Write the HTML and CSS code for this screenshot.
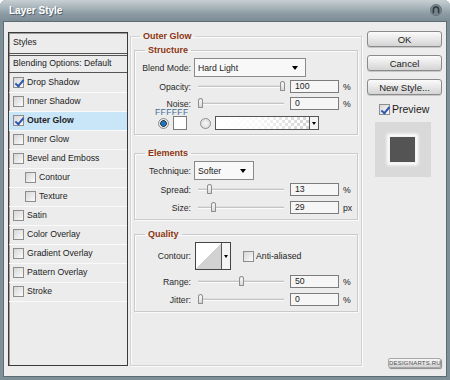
FILE: index.html
```html
<!DOCTYPE html>
<html lang="en">
<head>
  <meta charset="UTF-8">
  <title>Layer Style</title>
  <link rel="stylesheet" href="styles.css">
</head>
<body>
  <div class="window">
    <div class="titlebar">
      <span class="title">Layer Style</span>
      <svg class="close" width="12" height="12" viewBox="-6 -6 12 12">
        <circle r="5.5" fill="#77858c" stroke="#5c6a71" stroke-width="0.8"/>
        <path d="M-2.6 3.2 V-0.4 A2.6 2.6 0 0 1 2.6 -0.4 V3.2" fill="none" stroke="#2f393e" stroke-width="1.6"/>
      </svg>
    </div>

    <div class="content">
      <!-- Styles list -->
      <div class="styles-list">
        <div class="list-head">Styles</div>
        <div class="list-blend">Blending Options: Default</div>
        <div class="item"><span class="cb on"></span>Drop Shadow</div>
        <div class="item"><span class="cb"></span>Inner Shadow</div>
        <div class="item active"><span class="cb on"></span>Outer Glow</div>
        <div class="item"><span class="cb"></span>Inner Glow</div>
        <div class="item"><span class="cb"></span>Bevel and Emboss</div>
        <div class="item sub"><span class="cb"></span>Contour</div>
        <div class="item sub"><span class="cb"></span>Texture</div>
        <div class="item"><span class="cb"></span>Satin</div>
        <div class="item"><span class="cb"></span>Color Overlay</div>
        <div class="item"><span class="cb"></span>Gradient Overlay</div>
        <div class="item"><span class="cb"></span>Pattern Overlay</div>
        <div class="item"><span class="cb"></span>Stroke</div>
      </div>

      <!-- Settings -->
      <fieldset class="outer">
        <legend>Outer Glow</legend>

        <fieldset class="group structure">
          <legend>Structure</legend>
          <div class="row row-select">
            <span class="lbl">Blend Mode:</span>
            <div class="select blend"><span>Hard Light</span><i class="arrow"></i></div>
          </div>
          <div class="row row-slider opacity">
            <span class="lbl">Opacity:</span>
            <div class="slider"><span class="thumb" style="left: 82px"></span></div>
            <span class="num">100</span><span class="unit">%</span>
          </div>
          <div class="row row-slider noise">
            <span class="lbl">Noise:</span>
            <div class="slider"><span class="thumb" style="left: 0px"></span></div>
            <span class="num">0</span><span class="unit">%</span>
          </div>
          <div class="hex">FFFFFF</div>
          <div class="row row-color">
            <span class="radio on"></span>
            <span class="swatch"></span>
            <span class="radio"></span>
            <div class="gradient"><span class="gradient-fill"></span><i class="arrow-box"><i class="arrow"></i></i></div>
          </div>
        </fieldset>

        <fieldset class="group elements">
          <legend>Elements</legend>
          <div class="row row-select">
            <span class="lbl">Technique:</span>
            <div class="select technique"><span>Softer</span><i class="arrow"></i></div>
          </div>
          <div class="row row-slider spread">
            <span class="lbl">Spread:</span>
            <div class="slider"><span class="thumb" style="left: 9px"></span></div>
            <span class="num">13</span><span class="unit">%</span>
          </div>
          <div class="row row-slider size">
            <span class="lbl">Size:</span>
            <div class="slider"><span class="thumb" style="left: 13px"></span></div>
            <span class="num">29</span><span class="unit">px</span>
          </div>
        </fieldset>

        <fieldset class="group quality">
          <legend>Quality</legend>
          <div class="row row-contour">
            <span class="lbl">Contour:</span>
            <div class="contour"><span class="curve"></span><i class="arrow-box"><i class="arrow"></i></i></div>
            <span class="cb"></span><span class="aa">Anti-aliased</span>
          </div>
          <div class="row row-slider range">
            <span class="lbl">Range:</span>
            <div class="slider"><span class="thumb" style="left: 41px"></span></div>
            <span class="num">50</span><span class="unit">%</span>
          </div>
          <div class="row row-slider jitter">
            <span class="lbl">Jitter:</span>
            <div class="slider"><span class="thumb" style="left: 0px"></span></div>
            <span class="num">0</span><span class="unit">%</span>
          </div>
        </fieldset>
      </fieldset>

      <!-- Buttons and preview -->
      <div class="actions">
        <button class="btn">OK</button>
        <button class="btn">Cancel</button>
        <button class="btn">New Style...</button>
        <div class="preview-toggle"><span class="cb on"></span>Preview</div>
        <div class="preview"><div class="preview-square"></div></div>
        <div class="badge">DESIGNARTS.RU</div>
      </div>
    </div>
  </div>
</body>
</html>
```

FILE: styles.css
```css
* {
  box-sizing: border-box;
}

body {
  margin: 0;
  font-family: "Liberation Sans", Arial, sans-serif;
  font-size: 8.7px;
  color: #222;
  background: #fff;
}

.window {
  width: 450px;
  height: 380px;
  background: #7f8f98;
  border-radius: 6px 6px 0 0;
  display: flex;
  flex-direction: column;
}

.titlebar {
  height: 21px;
  flex-shrink: 0;
  display: flex;
  align-items: center;
  justify-content: space-between;
  padding: 0 8px 1px 9px;
  border-radius: 6px 6px 0 0;
  background: linear-gradient(#c6cfd4, #a9b5bb 35%, #8d9ca4 65%, #7d8d96);
}

.title {
  color: #fff;
  font-size: 10px;
  font-weight: bold;
  text-shadow: 1px 1px 0 #55656d;
}

.close {
  display: block;
}

.content {
  flex: 1;
  margin: 0 3px 3px;
  background: #ececec;
  border: 1px solid #5d6c74;
  display: flex;
  align-items: flex-start;
  padding: 0 5px 0 4px;
}

/* Styles list */
.styles-list {
  width: 120px;
  height: 334px;
  margin-top: 10px;
  border: 1px solid #3a3a3a;
  box-shadow: inset 1px 1px 0 #9a9a9a;
  background: #ececec;
  flex-shrink: 0;
}

.list-head {
  height: 21px;
  line-height: 19px;
  padding-left: 4px;
  border-bottom: 1px solid #555;
}

.list-blend {
  margin: 1px 0;
  height: 18px;
  line-height: 15px;
  padding-left: 4px;
  border-top: 1px solid #555;
  border-bottom: 1px solid #555;
}

.item {
  height: 19px;
  display: flex;
  align-items: center;
  padding: 0 0 2px 4px;
  border-bottom: 1px solid #fafafa;
}

.item .cb {
  margin-right: 3px;
}

.item.sub {
  padding-left: 16px;
}

.item.active {
  background: #c9e6f8;
  font-weight: bold;
}

.cb {
  position: relative;
  display: inline-block;
  width: 11px;
  height: 11px;
  flex-shrink: 0;
  border: 1px solid #8d8d8d;
  background: linear-gradient(135deg, #d6d6d6, #fbfbfb);
}

.cb.on::after {
  content: "";
  position: absolute;
  left: 3px;
  top: 0px;
  width: 3px;
  height: 7px;
  border-right: 2px solid #2e58b0;
  border-bottom: 2px solid #2e58b0;
  transform: rotate(40deg);
}

/* Settings */
fieldset {
  margin: 0;
  min-width: 0;
}

legend {
  padding: 0 3px;
  line-height: 12px;
  font-weight: bold;
  color: #8c3410;
}

.outer {
  width: 232px;
  height: 336px;
  margin: 8px 0 0 2px;
  padding: 2px 3px 0;
  border: 1px solid #d2d2d2;
  box-shadow: inset 1px 1px 0 #fafafa, 1px 1px 0 #fafafa;
  flex-shrink: 0;
}

.outer > legend {
  margin-left: 6px;
  font-size: 9px;
}

.group {
  padding: 0 0 5px;
  border: 1px solid #cacaca;
  box-shadow: inset 1px 1px 0 #fafafa, 1px 1px 0 #fafafa;
}

.group > legend {
  margin-left: 10px;
  font-size: 9px;
}

.structure {
  padding-bottom: 4px;
}

.elements {
  margin-top: 12px;
}

.quality {
  margin-top: 8px;
}

.row {
  display: flex;
  align-items: center;
}

.lbl {
  width: 56px;
  text-align: right;
  flex-shrink: 0;
  color: #2a2a2a;
}

.row-select {
  height: 19px;
  margin-top: 2px;
}

.select {
  height: 19px;
  margin-left: 3px;
  display: flex;
  align-items: center;
  justify-content: space-between;
  padding: 0 7px 0 3px;
  background: #f8f8f8;
  border: 1px solid #8a8a8a;
}

.blend {
  width: 112px;
}

.technique {
  width: 60px;
}

.arrow {
  display: block;
  width: 0;
  height: 0;
  border-left: 3.5px solid transparent;
  border-right: 3.5px solid transparent;
  border-top: 4px solid #000;
}

.row-slider {
  height: 13px;
  margin-top: 4px;
}

.row-slider.opacity,
.row-slider.spread {
  margin-top: 3px;
}

.row-slider.size,
.row-slider.range,
.row-slider.jitter {
  margin-top: 5px;
}

.slider {
  position: relative;
  width: 86px;
  height: 13px;
  margin-left: 7px;
  background: linear-gradient(#c4c4c4, #c4c4c4) 0 6px / 100% 1px no-repeat,
    linear-gradient(#fbfbfb, #fbfbfb) 0 7px / 100% 1px no-repeat,
    linear-gradient(#dedede, #dedede) 0 5px / 100% 1px no-repeat;
}

.thumb {
  position: absolute;
  top: 1px;
  width: 5px;
  height: 10px;
  border: 1px solid #8e8e8e;
  border-radius: 3px 3px 1px 1px;
  background: linear-gradient(#fdfdfd, #d8d8d8);
}

.num {
  width: 49px;
  height: 13px;
  margin-left: 6px;
  padding-left: 4px;
  line-height: 11px;
  background: #f6f6f6;
  border: 1px solid #7c7c7c;
}

.unit {
  margin-left: 4px;
}

.hex {
  margin: -2px 0 0 20px;
  height: 8px;
  line-height: 8px;
  font-size: 8.5px;
  letter-spacing: 0.4px;
  color: #3f6d92;
}

.row-color {
  height: 14px;
  margin-top: 0;
  padding-left: 23px;
}

.radio {
  width: 11px;
  height: 11px;
  border-radius: 50%;
  border: 1px solid #8d8d8d;
  background: radial-gradient(circle, #f7f7f7, #d6d6d6);
}

.radio.on {
  background: radial-gradient(circle, #1c78c4 0 2px, #2b3a46 2.6px 3px, #e6e6e6 3.6px);
}

.swatch {
  width: 14px;
  height: 14px;
  margin: 0 13px 0 4px;
  background: #fff;
  border: 1px solid #7a7a7a;
}

.gradient {
  width: 104px;
  height: 14px;
  margin-left: 4px;
  display: flex;
  border: 1px solid #555;
}

.gradient-fill {
  flex: 1;
  background: linear-gradient(to right, #fff, rgba(255, 255, 255, 0.85) 45%, rgba(255, 255, 255, 0.1)),
    repeating-conic-gradient(#cfcfcf 0 25%, #fff 0 50%) 0 0 / 6px 6px;
}

.arrow-box {
  width: 9px;
  display: flex;
  align-items: center;
  justify-content: center;
  border-left: 1px solid #555;
  background: #f4f4f4;
}

.arrow-box .arrow {
  border-left-width: 2.5px;
  border-right-width: 2.5px;
  border-top-width: 3px;
}

.row-contour {
  height: 28px;
  margin-top: 2px;
}

.contour {
  width: 36px;
  height: 28px;
  margin: 0 12px 0 4px;
  display: flex;
  border: 1px solid #444;
}

.curve {
  flex: 1;
  background: linear-gradient(to bottom right, #fff 50%, #d2d2d2 50%);
}

.aa {
  margin-left: 2px;
}

/* Buttons and preview */
.actions {
  width: 75px;
  height: 337px;
  margin: 9px 0 0 5px;
  display: flex;
  flex-direction: column;
  flex-shrink: 0;
}

.btn {
  height: 16px;
  padding: 0;
  margin-bottom: 8px;
  font-family: inherit;
  font-size: 9.5px;
  color: #222;
  border: 1px solid #8a8a8a;
  border-radius: 3px;
  background: linear-gradient(#fbfbfb, #e4e4e4 60%, #d4d4d4);
  box-shadow: 0 1px 0 #c8c8c8;
}

.preview-toggle {
  display: flex;
  align-items: center;
  margin: -1px 0 0 12px;
  font-size: 10.5px;
  height: 14px;
}

.preview-toggle .cb {
  margin-right: 2px;
}

.preview {
  width: 56px;
  height: 55px;
  margin: 6px 0 0 8px;
  background: #d9d9d9;
  padding: 14px;
}

.preview-square {
  width: 27px;
  height: 27px;
  background: #545454;
  border: 1px solid #f2f2f2;
  box-shadow: 0 0 3px 2px #fff;
}

.badge {
  margin: auto 1px 0 auto;
  width: 53px;
  height: 10px;
  font-size: 6px;
  line-height: 8px;
  text-align: center;
  letter-spacing: 0.2px;
  color: #555;
  border: 1px solid #a8a8a8;
  border-radius: 2px;
  background: linear-gradient(#f6f6f6, #d2d2d2);
  box-shadow: 1px 1px 1px #8a8a8a;
}
```
